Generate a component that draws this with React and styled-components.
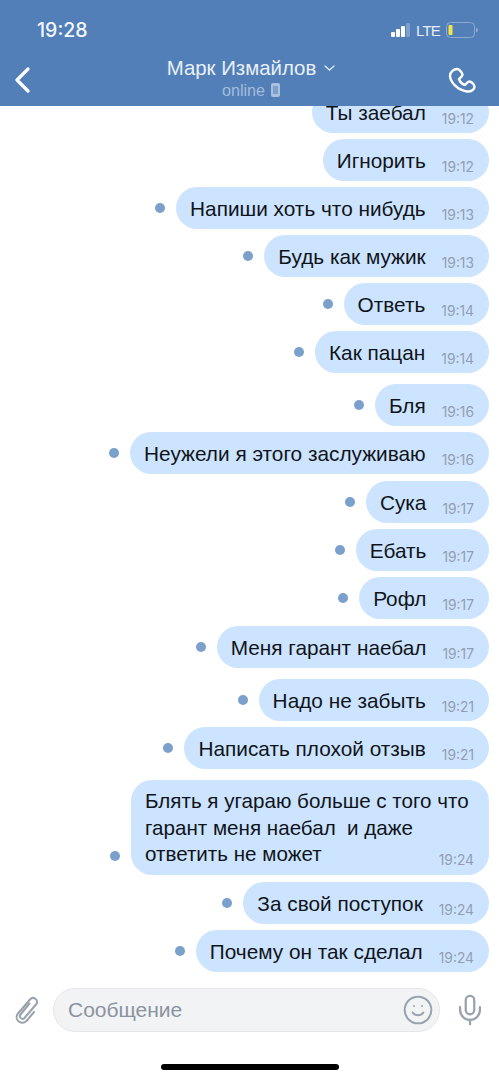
import React from "react";
import styled, { createGlobalStyle } from "styled-components";
import { Mic, Smile } from "lucide-react";

const messages = [
  { text: "Ты заебал", time: "19:12", read: true },
  { text: "Игнорить", time: "19:12", read: true, gap: 6 },
  { text: "Напиши хоть что нибудь", time: "19:13", gap: 6 },
  { text: "Будь как мужик", time: "19:13", gap: 6 },
  { text: "Ответь", time: "19:14", gap: 6 },
  { text: "Как пацан", time: "19:14", gap: 6 },
  { text: "Бля", time: "19:16", gap: 11 },
  { text: "Неужели я этого заслуживаю", time: "19:16", gap: 6 },
  { text: "Сука", time: "19:17", gap: 7 },
  { text: "Ебать", time: "19:17", gap: 6 },
  { text: "Рофл", time: "19:17", gap: 6 },
  { text: "Меня гарант наебал", time: "19:17", gap: 7 },
  { text: "Надо не забыть", time: "19:21", gap: 11 },
  { text: "Написать плохой отзыв", time: "19:21", gap: 6 },
  {
    lines: ["Блять я угараю больше с того что", "гарант меня наебал  и даже", "ответить не может"],
    time: "19:24",
    gap: 11
  },
  { text: "За свой поступок", time: "19:24", gap: 7 },
  { text: "Почему он так сделал", time: "19:24", gap: 6 }
];

export default function App() {
  return (
    <Screen>
      <GlobalStyle />
      <Header>
        <StatusBar>
          <Clock>19:28</Clock>
          <StatusIcons>
            <Signal />
            <Network>LTE</Network>
            <Battery />
          </StatusIcons>
        </StatusBar>
        <NavBar>
          <BackIcon />
          <Title>
            <Name>
              Марк Измайлов
              <Chevron />
            </Name>
            <Online>
              online
              <DeviceIcon />
            </Online>
          </Title>
          <CallIcon />
        </NavBar>
      </Header>

      <Messages>
        {messages.map((message, i) => (
          <Row key={i} $gap={message.gap}>
            {!message.read && <Dot $multi={!!message.lines} />}
            {message.lines ? (
              <LongBubble>
                {message.lines.map((line) => (
                  <Line key={line}>{line}</Line>
                ))}
                <LongTime>{message.time}</LongTime>
              </LongBubble>
            ) : (
              <Bubble>
                <Text>{message.text}</Text>
                <Time>{message.time}</Time>
              </Bubble>
            )}
          </Row>
        ))}
      </Messages>

      <Composer>
        <ClipIcon />
        <InputBox>
          <Placeholder>Сообщение</Placeholder>
          <Smile size={32} strokeWidth={1.5} color="#99a2ad" />
        </InputBox>
        <Mic size={34} strokeWidth={1.6} color="#99a2ad" />
      </Composer>
      <HomeBar />
    </Screen>
  );
}

function Signal() {
  return (
    <svg width="19" height="14" viewBox="0 0 19 14">
      <rect x="0" y="9" width="4" height="5" rx="1" fill="#fff" />
      <rect x="5" y="6" width="4" height="8" rx="1" fill="#fff" />
      <rect x="10" y="3" width="4" height="11" rx="1" fill="#fff" />
      <rect x="15" y="0" width="4" height="14" rx="1" fill="#7d9fcb" />
    </svg>
  );
}

function Battery() {
  return (
    <svg width="32" height="16" viewBox="0 0 32 16">
      <rect x="0.5" y="0.5" width="28" height="15" rx="4" fill="none" stroke="#8dabd2" />
      <rect x="2.500" y="3" width="4" height="10" rx="1" fill="#f5e34a" />
      <path d="M30 5.500c1.300.4 2 1.400 2 2.500s-.7 2.100-2 2.500z" fill="#8dabd2" />
    </svg>
  );
}

function BackIcon() {
  return (
    <svg width="16" height="26" viewBox="0 0 16 26">
      <path d="M14 2 3 13l11 11" fill="none" stroke="#fff" strokeWidth="3.2" strokeLinecap="round" strokeLinejoin="round" />
    </svg>
  );
}

function Chevron() {
  return (
    <ChevronSvg width="11" height="7" viewBox="0 0 11 7">
      <path d="m1 1 4.500 4L10 1" fill="none" stroke="#dce7f5" strokeWidth="1.4" strokeLinecap="round" />
    </ChevronSvg>
  );
}

function DeviceIcon() {
  return (
    <DeviceSvg width="9" height="14" viewBox="0 0 9 14">
      <rect x="0" y="0" width="9" height="14" rx="2" fill="#a9c1df" />
      <rect x="2" y="3" width="5" height="8" fill="#7d9fcb" />
    </DeviceSvg>
  );
}

function CallIcon() {
  return (
    <svg width="29" height="27" viewBox="0 0 29 27">
      <path
        d="M2 9C2 4.500 6 2 9 2c2 0 5 3 5.500 5.500.3 1.500-2 3-3.500 4.500 1 3 3 5 6 6 1.500-1.500 3-4 4.500-3.500 2.500.5 5 3 5 5.500 0 2-3 5-7.500 4.500C9 23 2.500 15 2 9Z"
        fill="none"
        stroke="#fff"
        strokeWidth="2.4"
        strokeLinejoin="round"
      />
    </svg>
  );
}

function ClipIcon() {
  return (
    <svg width="25" height="29" viewBox="0 0 25 29">
      <path
        d="M14.500 7.500 5.500 18.500c-2 2.500 1.500 6 4 3.500L21 8.500c3.500-4-2.500-9-6-5L3 17.500c-4.500 5.500 3 12.500 8.500 7.500l7.500-9"
        fill="none"
        stroke="#99a2ad"
        strokeWidth="2"
        strokeLinecap="round"
        strokeLinejoin="round"
      />
    </svg>
  );
}

const GlobalStyle = createGlobalStyle`
  html, body {
    margin: 0;
    background: #fff;
  }
`;

const Screen = styled.div`
  width: 499px;
  height: 1080px;
  display: flex;
  flex-direction: column;
  overflow: hidden;
  font-family: "Liberation Sans", Arial, sans-serif;
  background: #fff;
`;

const Header = styled.header`
  position: relative;
  z-index: 1;
  flex: none;
  height: 106px;
  background: #527fb8;
  color: #fff;
`;

const StatusBar = styled.div`
  height: 54px;
  display: flex;
  align-items: center;
  justify-content: space-between;
  padding: 6px 21px 0 37px;
  box-sizing: border-box;
`;

const Clock = styled.span`
  font-family: "Inter", sans-serif;
  font-size: 19.5px;
  font-weight: 500;
  color: #f4f7fb;
`;

const StatusIcons = styled.div`
  display: flex;
  align-items: center;
  gap: 6px;
`;

const Network = styled.span`
  font-size: 15px;
  letter-spacing: -0.8px;
  color: #e6edf6;
`;

const NavBar = styled.div`
  height: 52px;
  display: flex;
  align-items: flex-start;
  justify-content: space-between;
  padding: 13px 22px 0 14px;
  box-sizing: border-box;
`;

const Title = styled.div`
  display: flex;
  flex-direction: column;
  align-items: center;
  margin-top: -10px;
  margin-left: 24px;
`;

const Name = styled.div`
  display: flex;
  align-items: center;
  font-size: 20.4px;
  line-height: 23px;
  color: #e9f0f8;
`;

const ChevronSvg = styled.svg`
  margin-left: 8px;
`;

const Online = styled.div`
  display: flex;
  align-items: center;
  gap: 6px;
  font-size: 16.2px;
  line-height: 20px;
  color: #a4bcdb;
`;

const DeviceSvg = styled.svg`
  flex: none;
`;

const Messages = styled.main`
  flex: 1;
  min-height: 0;
  display: flex;
  flex-direction: column;
  justify-content: flex-end;
  overflow: hidden;
  padding: 0 10px 15px 0;
`;

const Row = styled.div`
  flex: none;
  display: flex;
  justify-content: flex-end;
  align-items: center;
  gap: 11px;
  margin-top: ${(p) => p.$gap || 0}px;
`;

const Dot = styled.span`
  flex: none;
  width: 10px;
  height: 10px;
  border-radius: 50%;
  background: #7ba0cc;
  align-self: ${(p) => (p.$multi ? "flex-end" : "center")};
  margin-bottom: ${(p) => (p.$multi ? "14px" : "0")};
`;

const Bubble = styled.div`
  height: 42px;
  box-sizing: border-box;
  display: flex;
  align-items: center;
  padding: 0 15px 0 14px;
  border-radius: 21px;
  background: #cce4ff;
`;

const Text = styled.span`
  font-size: 20.8px;
  line-height: 24px;
  margin-top: 2px;
  color: #10141a;
`;

const Time = styled.span`
  margin-left: 16px;
  margin-top: 14px;
  font-family: "Inter", sans-serif;
  font-size: 13.8px;
  color: #929eaf;
`;

const LongBubble = styled.div`
  position: relative;
  width: 358px;
  height: 95px;
  box-sizing: border-box;
  padding: 8px 14px 0;
  border-radius: 21px;
  background: #cce4ff;
`;

const Line = styled.div`
  font-size: 20.6px;
  line-height: 26.500px;
  white-space: pre;
  color: #10141a;
`;

const LongTime = styled.span`
  position: absolute;
  right: 15px;
  bottom: 7px;
  font-family: "Inter", sans-serif;
  font-size: 13.8px;
  color: #929eaf;
`;

const Composer = styled.div`
  flex: none;
  height: 46px;
  display: flex;
  align-items: center;
  padding: 0 12px 0 15px;
  gap: 13px;
`;

const InputBox = styled.div`
  flex: 1;
  height: 44px;
  box-sizing: border-box;
  display: flex;
  align-items: center;
  justify-content: space-between;
  padding: 0 5px 0 14px;
  border: 1px solid #e4e6e9;
  border-radius: 22px;
  background: #f2f3f5;
`;

const Placeholder = styled.span`
  font-size: 21px;
  color: #8a939f;
`;

const HomeBar = styled.div`
  flex: none;
  width: 178px;
  height: 6px;
  margin: 31px auto 10px;
  border-radius: 3px;
  background: #000;
`;
